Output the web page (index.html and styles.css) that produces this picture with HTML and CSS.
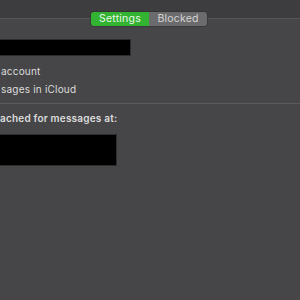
FILE: index.html
```html
<!DOCTYPE html>
<html lang="en">
<head>
  <meta charset="UTF-8">
  <title>Messages Accounts</title>
  <link rel="stylesheet" href="styles.css">
</head>
<body>
<div class="toolbar">
  <div class="segmented">
    <div class="segment active">Settings</div>
    <div class="segment">Blocked</div>
  </div>
</div>

<div class="pane">
  <!-- redacted account address -->
  <div class="redacted account-id"></div>

  <div class="option">account</div>
  <div class="option">sages in iCloud</div>

  <div class="divider"></div>

  <div class="label">ached for messages at:</div>
  <div class="redacted addresses"></div>
</div>
</body>
</html>
```

FILE: styles.css
```css
body {
  margin: 0;
  background: #464648;
  font-family: Inter, 'Liberation Sans', sans-serif;
  font-size: 10px;
  color: #dcdcdc;
}

.toolbar {
  height: 18px;
  background: #3d3d3f;
  border-bottom: 1px solid #555557;
  display: flex;
  align-items: flex-start;
}

.segmented {
  display: flex;
  margin: 12px 0 0 91px;
  height: 14px;
  border-radius: 3px;
  overflow: hidden;
  position: relative;
  box-shadow: 0 0 0 0.5px #2e2e30;
  font-size: 10.5px;
  letter-spacing: 0.2px;
}

.segment {
  width: 58px;
  line-height: 14px;
  text-align: center;
  background: #6b6b6d;
  color: #d4d4d4;
}

.segment.active {
  background: #32b332;
  color: #eaf7ea;
}

.pane {
  padding-top: 20px;
}

.redacted {
  background: #000;
  border: 1px solid #2c2c2c;
  border-left: none;
}

.account-id {
  width: 130px;
  height: 15px;
}

.option {
  line-height: 18px;
  padding-left: 1px;
  letter-spacing: 0.2px;
}

.account-id + .option {
  margin-top: 6px;
}

.divider {
  height: 1px;
  background: #5b5b5d;
  margin-top: 5px;
}

.label {
  font-weight: 600;
  line-height: 16px;
  margin-top: 6px;
  letter-spacing: 0.2px;
}

.addresses {
  width: 116px;
  height: 30px;
  margin-top: 8px;
}
```
